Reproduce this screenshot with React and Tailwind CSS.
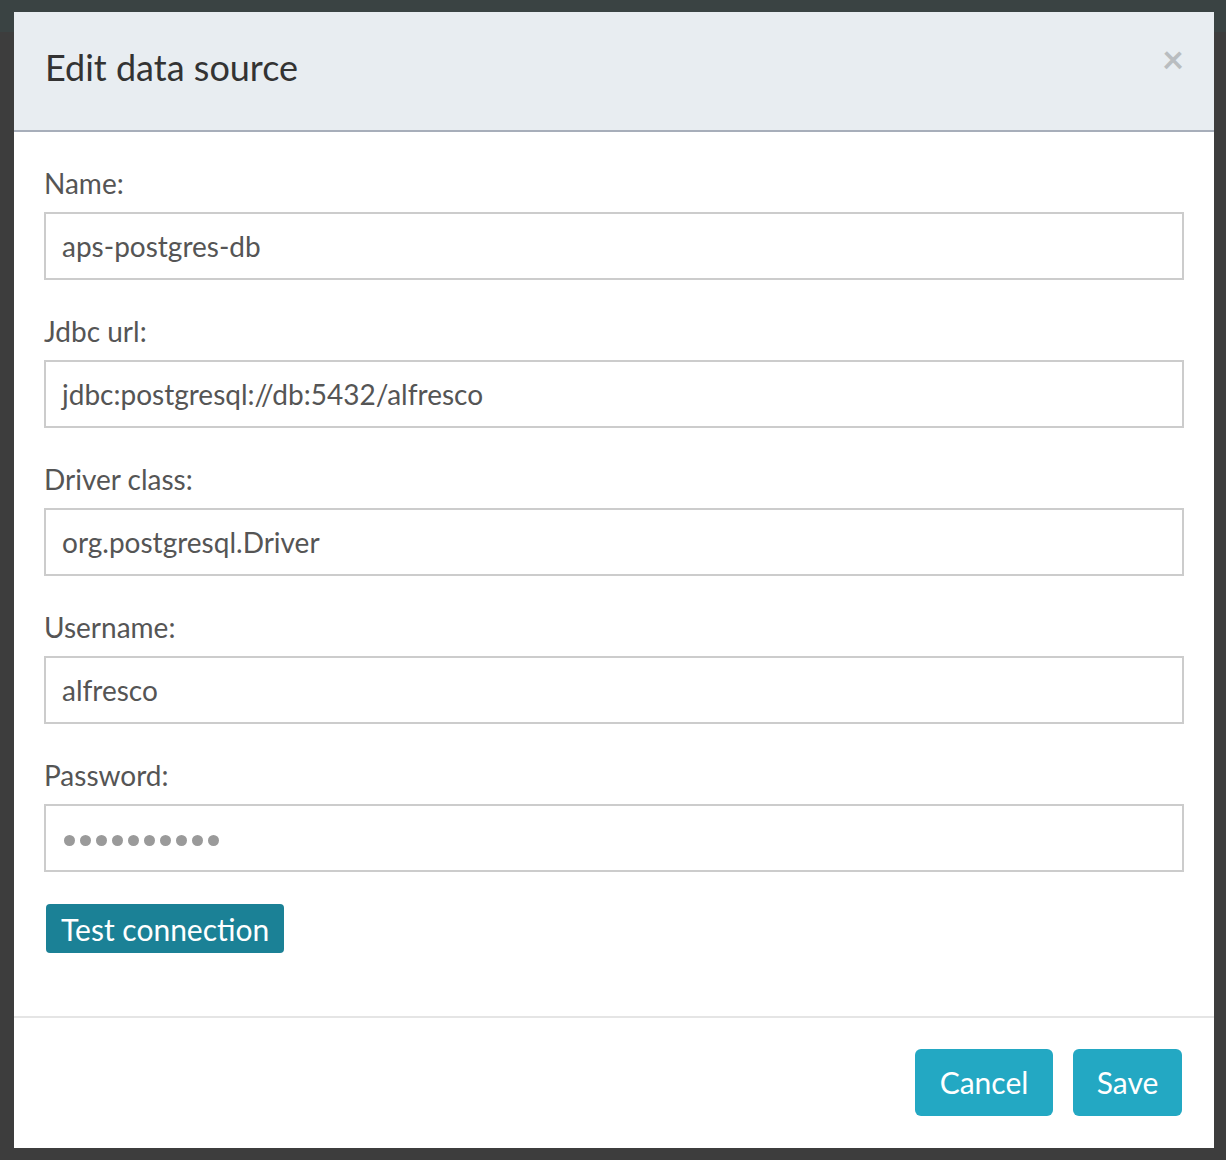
export default function App() {
  const fields = [
    { label: "Name:", value: "aps-postgres-db" },
    { label: "Jdbc url:", value: "jdbc:postgresql://db:5432/alfresco" },
    { label: "Driver class:", value: "org.postgresql.Driver" },
    { label: "Username:", value: "alfresco" },
  ];
  return (
    <div className="relative w-[1226px] h-[1160px] bg-[#3d3d3d] overflow-hidden" style={{ fontFamily: "Lato, 'Open Sans', sans-serif" }}>
      <div className="absolute left-0 top-0 w-full h-[32px] bg-[#3a4343]"></div>
      <div className="absolute left-[14px] top-[12px] w-[1200px] h-[1136px] bg-white flex flex-col">
        <div className="h-[120px] bg-[#e8edf1] border-b-2 border-[#a7aeba] flex items-center justify-between pl-[31px] pr-[30px]">
          <h1 className="text-[36px] text-[#333] leading-none -mt-[8px]">Edit data source</h1>
          <span className="text-[#b9bdc0] text-[38px] font-bold leading-none -mt-[26px]">×</span>
        </div>
        <div className="flex flex-col px-[30px] pt-[33px]">
          {fields.map((f) => (
            <div key={f.label} className="flex flex-col mb-[33px]">
              <label className="text-[28px] text-[#555] leading-[36px] mb-[11px]">{f.label}</label>
              <div className="h-[68px] border-2 border-[#cccccc] flex items-center px-[16px] text-[28px] text-[#555]">
                {f.value}
              </div>
            </div>
          ))}
          <div className="flex flex-col">
            <label className="text-[28px] text-[#555] leading-[36px] mb-[11px]">Password:</label>
            <div className="h-[68px] border-2 border-[#cccccc] flex items-center pl-[18px] pt-[4px] gap-[5px]">
              {Array.from({ length: 10 }).map((_, i) => (
                <span key={i} className="w-[11px] h-[11px] rounded-full bg-[#9a9a9a]"></span>
              ))}
            </div>
          </div>
          <div className="mt-[32px]">
            <button className="h-[49px] ml-[2px] px-[15px] bg-[#1b8196] text-white text-[30px] rounded-[4px] leading-none">Test connection</button>
          </div>
        </div>
        <div className="mt-auto border-t-2 border-[#e5e5e5] h-[132px] flex items-center justify-end gap-[20px] pr-[32px] pb-[2px]">
          <button className="h-[67px] w-[138px] bg-[#23a8c3] text-white text-[30px] rounded-[6px]">Cancel</button>
          <button className="h-[67px] w-[109px] bg-[#23a8c3] text-white text-[30px] rounded-[6px]">Save</button>
        </div>
      </div>
    </div>
  );
}
